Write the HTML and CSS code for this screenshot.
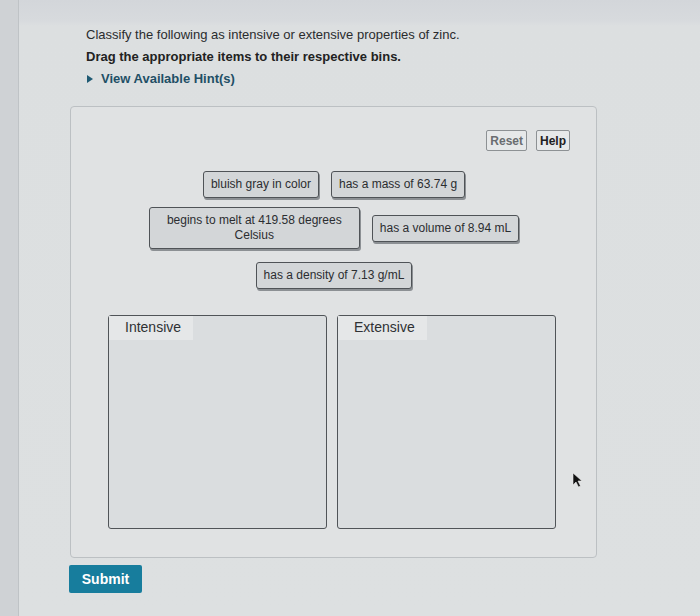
FILE: index.html
```html
<!DOCTYPE html>
<html>
<head>
<meta charset="utf-8">
<link rel="stylesheet" href="styles.css">
</head>
<body>
<div class="screen">
  <div class="edge"></div>
  <main class="content">
    <p class="prompt">Classify the following as intensive or extensive properties of zinc.</p>
    <p class="instr">Drag the appropriate items to their respective bins.</p>
    <div class="hint"><span class="tri"></span>View Available Hint(s)</div>
    <section class="panel">
      <div class="toolbar">
        <button class="tool reset">Reset</button>
        <button class="tool help">Help</button>
      </div>
      <div class="pool">
        <div class="row">
          <div class="item">bluish gray in color</div>
          <div class="item">has a mass of 63.74 g</div>
        </div>
        <div class="row">
          <div class="item wide">begins to melt at 419.58 degrees Celsius</div>
          <div class="item">has a volume of 8.94 mL</div>
        </div>
        <div class="row">
          <div class="item">has a density of 7.13 g/mL</div>
        </div>
      </div>
      <div class="bins">
        <div class="bin"><span class="bin-label">Intensive</span></div>
        <div class="bin"><span class="bin-label">Extensive</span></div>
      </div>
    </section>
    <button class="submit">Submit</button>
  </main>
  <svg class="cursor" width="12" height="16" viewBox="0 0 12 16"><path d="M1 1 L1 13 L4 10 L6.5 15 L8.5 14 L6 9 L10 9 Z" fill="#111" stroke="#eee" stroke-width="0.6"/></svg>
</div>
</body>
</html>
```
FILE: styles.css
```css
html, body {
  margin: 0;
  padding: 0;
}
body {
  background: #dcdfe0;
  font-family: "Liberation Sans", Arial, sans-serif;
  color: #2a2c2e;
}
.screen {
  position: relative;
  display: flex;
  width: 700px;
  height: 616px;
  overflow: hidden;
  background: linear-gradient(#d3d6da 0, #d7dadd 20px, #dcdfe0 26px, #dde0e1 100%);
}
.edge {
  width: 18px;
  flex: none;
  background: #cfd2d5;
  border-right: 1px solid #bfc3c6;
}
.content {
  padding: 26px 0 0 51px;
  width: 527px;
}
.prompt, .instr {
  margin: 0 0 0 16px;
  font-size: 13px;
  line-height: 18px;
}
.instr {
  margin-top: 4px;
  font-weight: bold;
  color: #222;
}
.hint {
  margin: 4px 0 0 17px;
  display: flex;
  align-items: center;
  font-size: 13px;
  line-height: 18px;
  font-weight: bold;
  color: #1f4f66;
}
.tri {
  width: 0;
  height: 0;
  border-top: 4px solid transparent;
  border-bottom: 4px solid transparent;
  border-left: 6px solid #1f5a73;
  margin-right: 8px;
}
.panel {
  margin-top: 18px;
  height: 452px;
  box-sizing: border-box;
  border: 1px solid #bcc0c3;
  border-radius: 4px;
  background: #e0e2e3;
  padding: 23px 26px 0 37px;
}
.toolbar {
  display: flex;
  justify-content: flex-end;
  gap: 9px;
}
.tool {
  font-family: "Liberation Sans", Arial, sans-serif;
  font-size: 12px;
  font-weight: bold;
  height: 21px;
  padding: 0 3px;
  border: 1px solid #8d9194;
  border-radius: 2px;
  background: #e6e8e9;
}
.reset { color: #6a6d70; }
.help { color: #1e2022; }
.pool {
  margin-top: 20px;
  display: flex;
  flex-direction: column;
  gap: 9px;
  margin-left: -10px;
}
.row {
  display: flex;
  justify-content: center;
  align-items: center;
  gap: 12px;
}
.row + .row + .row {
  margin-top: 4px;
}
.item {
  box-sizing: border-box;
  max-width: 211px;
  padding: 5px 7px;
  font-size: 12px;
  line-height: 15px;
  text-align: center;
  color: #2b2d30;
  background: #d3d6d8;
  border: 1.5px solid #4f5357;
  border-radius: 3px;
  box-shadow: 1px 2px 0 #8c9094;
}
.item.wide {
  width: 211px;
  padding: 5px 6px;
}
.bins {
  margin-top: 26px;
  display: flex;
  gap: 10px;
  margin-left: 0;
}
.bin {
  box-sizing: border-box;
  width: 219px;
  height: 214px;
  border: 1.5px solid #505458;
  border-radius: 3px;
  background: #dadddf;
}
.bin-label {
  display: inline-block;
  padding: 3px 12px 4px 16px;
  font-size: 14px;
  line-height: 17px;
  color: #2f3134;
  background: #e5e7e8;
}
.submit {
  margin-top: 7px;
  margin-left: -1px;
  width: 73px;
  height: 28px;
  border: none;
  border-radius: 2px;
  background: #177d9d;
  color: #fff;
  font-family: "Liberation Sans", Arial, sans-serif;
  font-size: 14px;
  font-weight: bold;
}
.cursor {
  position: absolute;
  left: 572px;
  top: 472px;
}
```
